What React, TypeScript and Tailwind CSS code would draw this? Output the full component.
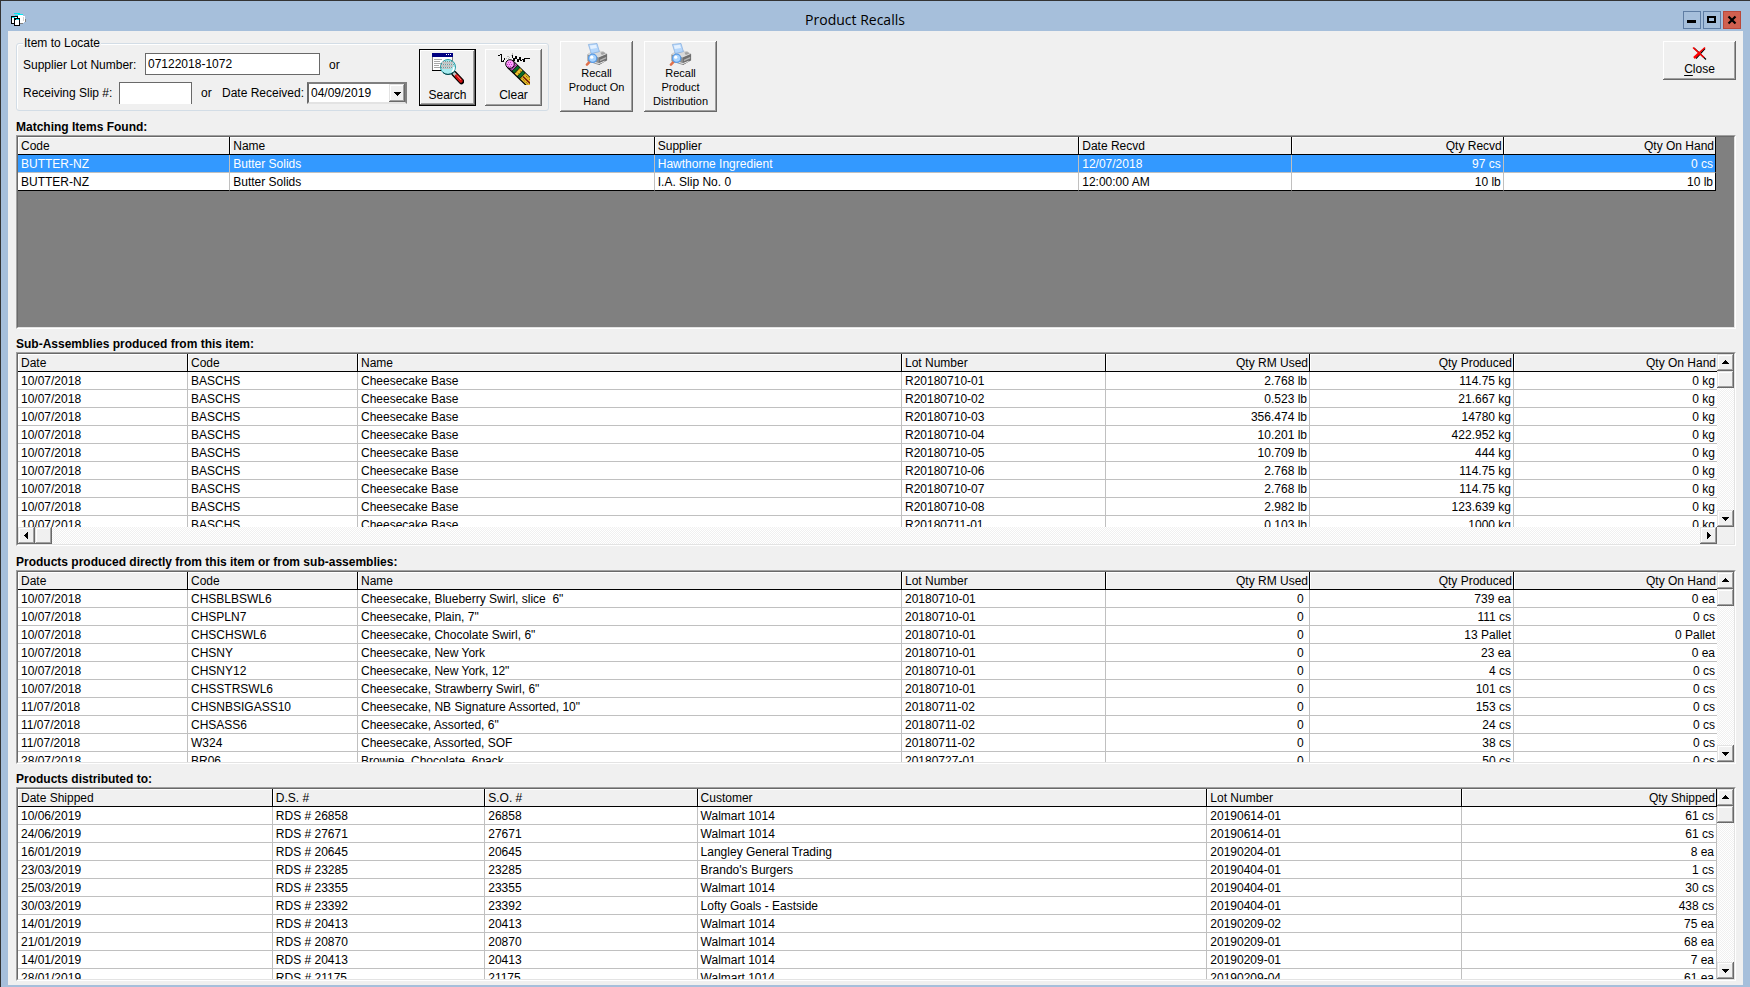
import React from "react";

const RAISED =
  "bg-[#f0f0f0] shadow-[inset_-1px_-1px_0_#696969,inset_1px_1px_0_#fff,inset_-2px_-2px_0_#a0a0a0]";
const SCROLL_BUTTON =
  "flex shrink-0 items-center justify-center bg-[#f0f0f0] shadow-[inset_-1px_-1px_0_#696969,inset_1px_1px_0_#e3e3e3,inset_-2px_-2px_0_#a0a0a0,inset_2px_2px_0_#fff]";
const TRACK =
  "bg-[repeating-conic-gradient(#ffffff_0%_25%,#f0f0f0_0%_50%)] bg-[length:2px_2px]";

type Column = { title: string; width: string; right?: boolean };

const itemColumns: Column[] = [
  { title: "Code", width: "w-[12.5%]" },
  { title: "Name", width: "w-[25%]" },
  { title: "Supplier", width: "w-[25%]" },
  { title: "Date Recvd", width: "w-[12.5%]" },
  { title: "Qty Recvd", width: "w-[12.5%]", right: true },
  { title: "Qty On Hand", width: "w-[12.5%]", right: true },
];

const itemRows = [
  ["BUTTER-NZ", "Butter Solids", "Hawthorne Ingredient", "12/07/2018", "97 cs", "0 cs"],
  ["BUTTER-NZ", "Butter Solids", "I.A. Slip No. 0", "12:00:00 AM", "10 lb", "10 lb"],
];

const productionColumns: Column[] = [
  { title: "Date", width: "w-[10%]" },
  { title: "Code", width: "w-[10%]" },
  { title: "Name", width: "w-[32%]" },
  { title: "Lot Number", width: "w-[12%]" },
  { title: "Qty RM Used", width: "w-[12%]", right: true },
  { title: "Qty Produced", width: "w-[12%]", right: true },
  { title: "Qty On Hand", width: "w-[12%]", right: true },
];

const subAssemblyRows = [
  ["R20180710-01", "2.768 lb", "114.75 kg"],
  ["R20180710-02", "0.523 lb", "21.667 kg"],
  ["R20180710-03", "356.474 lb", "14780 kg"],
  ["R20180710-04", "10.201 lb", "422.952 kg"],
  ["R20180710-05", "10.709 lb", "444 kg"],
  ["R20180710-06", "2.768 lb", "114.75 kg"],
  ["R20180710-07", "2.768 lb", "114.75 kg"],
  ["R20180710-08", "2.982 lb", "123.639 kg"],
  ["R20180711-01", "0.103 lb", "1000 kg"],
].map(([lot, used, made]) => ["10/07/2018", "BASCHS", "Cheesecake Base", lot, used, made, "0 kg"]);

const productRows = [
  ["10/07/2018", "CHSBLBSWL6", 'Cheesecake, Blueberry Swirl, slice  6"', "20180710-01", "0 ", "739 ea", "0 ea"],
  ["10/07/2018", "CHSPLN7", 'Cheesecake, Plain, 7"', "20180710-01", "0 ", "111 cs", "0 cs"],
  ["10/07/2018", "CHSCHSWL6", 'Cheesecake, Chocolate Swirl, 6"', "20180710-01", "0 ", "13 Pallet", "0 Pallet"],
  ["10/07/2018", "CHSNY", "Cheesecake, New York", "20180710-01", "0 ", "23 ea", "0 ea"],
  ["10/07/2018", "CHSNY12", 'Cheesecake, New York, 12"', "20180710-01", "0 ", "4 cs", "0 cs"],
  ["10/07/2018", "CHSSTRSWL6", 'Cheesecake, Strawberry Swirl, 6"', "20180710-01", "0 ", "101 cs", "0 cs"],
  ["11/07/2018", "CHSNBSIGASS10", 'Cheesecake, NB Signature Assorted, 10"', "20180711-02", "0 ", "153 cs", "0 cs"],
  ["11/07/2018", "CHSASS6", 'Cheesecake, Assorted, 6"', "20180711-02", "0 ", "24 cs", "0 cs"],
  ["11/07/2018", "W324", "Cheesecake, Assorted, SOF", "20180711-02", "0 ", "38 cs", "0 cs"],
  ["28/07/2018", "BR06", "Brownie, Chocolate, 6pack", "20180727-01", "0 ", "50 cs", "0 cs"],
];

const shipmentColumns: Column[] = [
  { title: "Date Shipped", width: "w-[15%]" },
  { title: "D.S. #", width: "w-[12.5%]" },
  { title: "S.O. #", width: "w-[12.5%]" },
  { title: "Customer", width: "w-[30%]" },
  { title: "Lot Number", width: "w-[15%]" },
  { title: "Qty Shipped", width: "w-[15%]", right: true },
];

const shipmentRows = [
  ["10/06/2019", "26858", "Walmart 1014", "20190614-01", "61 cs"],
  ["24/06/2019", "27671", "Walmart 1014", "20190614-01", "61 cs"],
  ["16/01/2019", "20645", "Langley General Trading", "20190204-01", "8 ea"],
  ["23/03/2019", "23285", "Brando's Burgers", "20190404-01", "1 cs"],
  ["25/03/2019", "23355", "Walmart 1014", "20190404-01", "30 cs"],
  ["30/03/2019", "23392", "Lofty Goals - Eastside", "20190404-01", "438 cs"],
  ["14/01/2019", "20413", "Walmart 1014", "20190209-02", "75 ea"],
  ["21/01/2019", "20870", "Walmart 1014", "20190209-01", "68 ea"],
  ["14/01/2019", "20413", "Walmart 1014", "20190209-01", "7 ea"],
  ["28/01/2019", "21175", "Walmart 1014", "20190209-04", "61 ea"],
].map(([date, no, customer, lot, qty]) => [date, `RDS # ${no}`, no, customer, lot, qty]);

function Arrow({ d }: { d: string }) {
  return (
    <svg width="7" height="7" viewBox="0 0 7 7" shapeRendering="crispEdges" aria-hidden="true">
      <path d={d} fill="#000" />
    </svg>
  );
}
const UP = "M3 1h1v1h1v1h1v1h1v1H0V4h1V3h1V2h1z";
const DOWN = "M0 2h7v1H6v1H5v1H4v1H3V5H2V4H1V3H0z";
const LEFT = "M1 3h1V2h1V1h1V0h1v7H4V6H3V5H2V4H1z";
const RIGHT = "M2 0h1v1h1v1h1v1h1v1H5v1H4v1H3v1H2z";

function VerticalScroll() {
  return (
    <div className={`flex w-[17px] shrink-0 flex-col justify-between ${TRACK}`}>
      <div className="flex flex-col">
        <button type="button" aria-label="Scroll up" className={`h-[17px] w-full ${SCROLL_BUTTON}`}>
          <Arrow d={UP} />
        </button>
        <div className={`h-[17px] w-full ${SCROLL_BUTTON}`} />
      </div>
      <button type="button" aria-label="Scroll down" className={`h-[17px] w-full ${SCROLL_BUTTON}`}>
        <Arrow d={DOWN} />
      </button>
    </div>
  );
}

function HorizontalScroll() {
  return (
    <div className="flex h-[17px] shrink-0">
      <div className={`flex flex-1 justify-between ${TRACK}`}>
        <div className="flex">
          <button type="button" aria-label="Scroll left" className={`w-[17px] ${SCROLL_BUTTON}`}>
            <Arrow d={LEFT} />
          </button>
          <div className={`w-[17px] ${SCROLL_BUTTON}`} />
        </div>
        <button type="button" aria-label="Scroll right" className={`w-[17px] ${SCROLL_BUTTON}`}>
          <Arrow d={RIGHT} />
        </button>
      </div>
      <div className="w-[17px] bg-[#f0f0f0]" />
    </div>
  );
}

function Grid({
  label,
  columns,
  rows,
  selected,
  closed,
  bleed,
}: {
  label: string;
  columns: Column[];
  rows: string[][];
  selected?: number;
  closed?: boolean;
  bleed?: boolean;
}) {
  return (
    <table
      aria-label={label}
      className={`table-fixed border-separate border-spacing-0 ${bleed ? "w-[calc(100%+1px)]" : "w-full"}`}
    >
      <thead>
        <tr>
          {columns.map((c) => (
            <th
              key={c.title}
              className={`h-[18px] overflow-hidden whitespace-pre border-b border-r border-black bg-[#f0f0f0] py-0 pl-[3px] pr-px font-normal leading-4 shadow-[inset_1px_1px_0_#fff] ${c.width} ${c.right ? "text-right" : "text-left"}`}
            >
              {c.title}
            </th>
          ))}
        </tr>
      </thead>
      <tbody>
        {rows.map((row, r) => {
          const last = closed && r === rows.length - 1;
          return (
            <tr key={r} className={r === selected ? "bg-[#3399ff] text-white" : "bg-white"}>
              {row.map((cell, i) => (
                <td
                  key={i}
                  className={`h-[18px] overflow-hidden whitespace-pre border-b border-r py-0 pl-[3px] pr-0.5 leading-4 ${last ? "border-b-black" : "border-b-[#c0c0c0]"} ${closed && i === row.length - 1 ? "border-r-black" : "border-r-[#c0c0c0]"} ${columns[i].right ? "text-right" : "text-left"}`}
                >
                  {cell}
                </td>
              ))}
            </tr>
          );
        })}
      </tbody>
    </table>
  );
}

function Section({ title, children }: { title: string; children: React.ReactNode }) {
  return (
    <section className="flex flex-col">
      <h2 className="flex h-[23px] items-end text-xs font-bold leading-4">{title}</h2>
      <div className="border border-b-white border-l-[#a0a0a0] border-r-white border-t-[#a0a0a0]">
        <div className="flex h-48 flex-col border border-b-[#e3e3e3] border-l-[#696969] border-r-[#e3e3e3] border-t-[#696969]">
          {children}
        </div>
      </div>
    </section>
  );
}

function WindowIcon() {
  return (
    <svg width="16" height="14" viewBox="0 0 16 14" shapeRendering="crispEdges" aria-hidden="true">
      <path d="M7 2h5v1h2v6h-1v1H8z" fill="#fff" />
      <path d="M3 0h6v1H3zM7 1h5v1H7zM4 2h3v1H4z" fill="#00e8f4" />
      <path d="M12 4h1v4h-1z" fill="#d0d0d0" />
      <path d="M14 6h1v3h-1zM9 10h3v1H9z" fill="#808080" />
      <path d="M0 3h7v2h2v8H3v-2H0z" fill="#000" />
      <path d="M1 5h2v5H1zM4 7h4v5H4zM4 4h2v1H4z" fill="#fff" />
      <path d="M1 4h3v1H1zM5 6h3v1H5z" fill="#00e8f4" />
    </svg>
  );
}

function SearchIcon() {
  return (
    <svg width="32" height="32" viewBox="0 0 32 32" aria-hidden="true">
      <g shapeRendering="crispEdges">
        <path d="M0 0h21v18H0z" fill="#808080" />
        <path d="M1 4h19v13H1z" fill="#fff" />
        <path d="M0 0h21v4H0z" fill="#000080" />
        <path d="M14 1h1v1h-1zM16 1h1v1h-1zM18 1h1v1h-1z" fill="#fff" />
        <path d="M2 6h8v1H2zM2 8h6v1H2zM2 10h7v1H2zM2 12h5v1H2zM2 14h6v1H2z" fill="#a8a8a8" />
        <path d="M0 17h10v1H0z" fill="#000" />
      </g>
      <path d="M22 20.500L29.500 28.500" stroke="#000" strokeWidth="5.500" strokeLinecap="round" />
      <path d="M21.500 20l2.500 2.500" stroke="#c8c8c8" strokeWidth="3" />
      <path d="M24.500 23L29 28" stroke="#d01010" strokeWidth="3.500" strokeLinecap="round" />
      <path d="M25 22.500l4 4.500" stroke="#ff8080" strokeWidth="1" />
      <circle cx="16" cy="14" r="7.500" fill="#a6ecf0" stroke="#2a9aa2" strokeWidth="1" />
      <g shapeRendering="crispEdges">
        <path d="M10 9h11v2H10zM9 12h12v2H9zM10 15h9v1h-9z" fill="#c4c4c4" />
        <path d="M11 8h9M9 11.500h13M9 14.500h12" stroke="#8c8c8c" strokeWidth="1" strokeDasharray="1 1" />
      </g>
      <path d="M20 19a6 6 0 0 0 2-5" stroke="#fff" strokeWidth="1.500" fill="none" />
      <path d="M11 19.500a7.500 7.500 0 0 0 10 0" stroke="#003c40" strokeWidth="1" fill="none" />
    </svg>
  );
}

function EraserIcon() {
  return (
    <svg width="32" height="32" viewBox="0 0 32 32" aria-hidden="true">
      <g fill="none" stroke="#000" strokeWidth="1" shapeRendering="crispEdges">
        <path d="M0 3L3 1.500L3 8L5 8.500L7 5" />
        <path d="M8 6l2-4l1 4l3-5v4" stroke="#b8b8b8" strokeDasharray="1 1" />
        <path d="M14 2.500l2 5l2-4l2 5l2-4l1 3l2-1l1 2l1-3h5" />
      </g>
      <g transform="translate(12 11) rotate(44)">
        <path d="M0-4.800h32v9.600H0z" fill="#000" />
        <path d="M0-4h6v7.500H0z" fill="#e87ae8" />
        <path d="M5-4v7.500" stroke="#8a308a" strokeWidth="1" />
        <path d="M6.500-4H9.500v7.500H6.500z" fill="#0a6a28" />
        <path d="M10-4h3.500v7.500H10z" fill="#f0c830" />
        <path d="M14-4h3v7.500h-3z" fill="#0a6a28" />
        <path d="M17.500-4H32v7.500H17.500z" fill="#f0c830" />
        <path d="M10-2h3.500M10 1h3.500M18-2.500h14M18 2h14" stroke="#8a5a00" strokeWidth="1" strokeDasharray="1 1" />
        <path d="M18 0h14" stroke="#701008" strokeWidth="1.500" />
      </g>
      <circle cx="12" cy="11" r="4.300" fill="#ff9cff" stroke="#000" strokeWidth="1" />
      <path d="M10 9.500h4M9 11.500h6M10 13.500h4" stroke="#c040c0" strokeWidth="1" strokeDasharray="1 1" />
    </svg>
  );
}

function PrinterIcon() {
  return (
    <svg width="24" height="23" viewBox="0 0 24 24" aria-hidden="true">
      <path d="M2 12l4-3 1 1.500 7.500-1.500L14 8l4 .5 4.500 3v6.500L14 23 2 19z" fill="#8f8f8f" />
      <path d="M2 12l4-3 1 1.500 7.500-1.500L14 8l4 .5 4.500 3L14 15z" fill="#d9d9d9" />
      <path d="M3 1.500L12 .5l2.500 8.500L6 11z" fill="#b4d6fb" stroke="#7fa9dc" strokeWidth=".7" />
      <path d="M4.500 2.500l6.500-.8 1 3.500-6.500 1z" fill="#e4f1ff" />
      <path d="M14 15l8.500-3.500v6.500L14 23z" fill="#6f6f6f" />
      <path d="M15 17.500l6.500-2.800v1.500L15 19z" fill="#b5b5b5" />
      <path d="M15.500 10l3-.7 2.500 1.700-4 1.500z" fill="#a2a2a2" />
      <path d="M9 20l5 1.500 6-2.500" stroke="#e9e9e9" strokeWidth="1" fill="none" />
      <path d="M4.500 19.500L1.500 22.500" stroke="#e0704a" strokeWidth="2.600" strokeLinecap="round" />
      <circle cx="7.500" cy="16" r="4.300" fill="#a9d4ff" stroke="#5a9ce6" strokeWidth="1.300" />
      <circle cx="6.500" cy="14.800" r="1.700" fill="#fff" />
    </svg>
  );
}

function CrossIcon() {
  return (
    <svg width="15" height="14" viewBox="0 0 15 14" aria-hidden="true">
      <path d="M2 2l12 11.500M13 2.500L4 12.500" stroke="#000" strokeWidth="1.200" />
      <path d="M1 1.500l11 10" stroke="#f00" strokeWidth="1.500" />
      <path d="M13 1.500L7.500 6.500" stroke="#f00" strokeWidth="1.500" />
      <path d="M8 6.500L2 12" stroke="#f00" strokeWidth="2.400" />
    </svg>
  );
}

const TITLE_BUTTON = "flex h-[18px] w-[18px] items-center justify-center border";

export default function App() {
  return (
    <div className="flex min-h-screen flex-col border-l border-t border-[#333333] bg-[#a6bfdb] font-['Liberation_Sans',Arial,sans-serif] text-xs text-black">
      <header className="flex h-[30px] items-center pl-2.5 pr-[9px] pt-2">
        <WindowIcon />
        <h1 className="flex-1 text-center font-['Open_Sans','Noto_Sans',sans-serif] text-sm leading-5">
          Product Recalls
        </h1>
        <div className="flex gap-0.5">
          <button type="button" aria-label="Minimize" className={`${TITLE_BUTTON} border-[#5f7da3]`}>
            <svg width="10" height="10" viewBox="0 0 10 10" shapeRendering="crispEdges" aria-hidden="true">
              <path d="M0 5h9v3H0z" />
            </svg>
          </button>
          <button type="button" aria-label="Maximize" className={`${TITLE_BUTTON} border-[#5f7da3]`}>
            <svg width="10" height="10" viewBox="0 0 10 10" shapeRendering="crispEdges" aria-hidden="true">
              <path d="M0 1h9v7H0zM2 3v3h5V3z" fillRule="evenodd" />
            </svg>
          </button>
          <button type="button" aria-label="Close window" className={`${TITLE_BUTTON} border-[#b9483a] bg-[#d0604f]`}>
            <svg width="10" height="10" viewBox="0 0 10 10" aria-hidden="true">
              <path d="M1.500 1.500l7 7M8.500 1.500l-7 7" stroke="#000" strokeWidth="2.200" />
            </svg>
          </button>
        </div>
      </header>

      <main className="mb-0.5 ml-[7px] mr-[7px] flex-1 bg-[#f0f0f0] pb-1 pl-2 pr-[7px]">
        <div className="flex items-start gap-[11px] pt-1.5">
          <fieldset className="min-w-0 rounded-[3px] border border-[#d3dde6] px-1.5 pb-1 shadow-[inset_1px_1px_0_#fff]">
            <legend className="bg-[#f0f0f0] px-px leading-3">Item to Locate</legend>
            <div className="flex gap-3">
              <div className="flex flex-col gap-[7px] pt-1">
                <div className="flex h-[22px] items-center">
                  <label htmlFor="lot" className="w-[122px] pt-0.5">Supplier Lot Number:</label>
                  <input
                    id="lot"
                    type="text"
                    defaultValue="07122018-1072"
                    className="h-full w-[175px] border border-[#696969] bg-white px-0.5 outline-none"
                  />
                  <span className="pl-[9px] pt-0.5">or</span>
                </div>
                <div className="flex h-[22px] items-center">
                  <label htmlFor="slip" className="w-24">Receiving Slip #:</label>
                  <input
                    id="slip"
                    type="text"
                    className="h-full w-[73px] border border-b-0 border-[#696969] bg-white px-0.5 outline-none"
                  />
                  <span className="w-7 pl-[9px]">or</span>
                  <label htmlFor="received" className="w-[87px] pl-0.5">Date Received:</label>
                  <div className="flex h-full w-[100px] border-2 border-b-[#e3e3e3] border-l-[#696969] border-r-[#808080] border-t-[#808080] bg-white">
                    <select id="received" className="min-w-0 flex-1 appearance-none bg-white pl-0.5 outline-none">
                      <option>04/09/2019</option>
                    </select>
                    <span className={`w-4 ${SCROLL_BUTTON}`}>
                      <Arrow d={DOWN} />
                    </span>
                  </div>
                </div>
              </div>
              <div className="flex gap-[9px]">
                <button
                  type="button"
                  className="flex h-[57px] w-[57px] flex-col items-center gap-[3px] border border-black bg-[#f0f0f0] pt-[3px] leading-[15px] shadow-[inset_-1px_-1px_0_#696969,inset_1px_1px_0_#fff,inset_-2px_-2px_0_#a0a0a0]"
                >
                  <SearchIcon />
                  Search
                </button>
                <button type="button" className={`flex h-[57px] w-[57px] flex-col items-center gap-[3px] pt-1 leading-[15px] ${RAISED}`}>
                  <EraserIcon />
                  Clear
                </button>
              </div>
            </div>
          </fieldset>
          <button type="button" className={`mt-1 flex h-[71px] w-[73px] flex-col items-center px-1 pt-0.5 text-[11px] leading-[14px] ${RAISED}`}>
            <PrinterIcon />
            <span>Recall Product On Hand</span>
          </button>
          <button type="button" className={`mt-1 flex h-[71px] w-[73px] flex-col items-center px-1 pt-0.5 text-[11px] leading-[14px] ${RAISED}`}>
            <PrinterIcon />
            <span>Recall Product Distribution</span>
          </button>
          <button type="button" className={`ml-auto mt-1 flex h-[39px] w-[73px] flex-col items-center gap-px pt-[5px] leading-4 ${RAISED}`}>
            <CrossIcon />
            <span>
              <span className="underline underline-offset-2">C</span>lose
            </span>
          </button>
        </div>

        <Section title="Matching Items Found:">
          <div className="flex-1 bg-[#808080] pr-[18px]">
            <Grid label="Matching items" columns={itemColumns} rows={itemRows} selected={0} closed />
          </div>
        </Section>

        <Section title="Sub-Assemblies produced from this item:">
          <div className="flex min-h-0 flex-1">
            <div className="min-w-0 flex-1 overflow-hidden bg-white">
              <Grid label="Sub-assemblies" columns={productionColumns} rows={subAssemblyRows} bleed />
            </div>
            <VerticalScroll />
          </div>
          <HorizontalScroll />
        </Section>

        <div className="pt-px">
          <Section title="Products produced directly from this item or from sub-assemblies:">
            <div className="flex min-h-0 flex-1">
              <div className="min-w-0 flex-1 overflow-hidden bg-white">
                <Grid label="Products produced" columns={productionColumns} rows={productRows} bleed />
              </div>
              <VerticalScroll />
            </div>
          </Section>
        </div>

        <Section title="Products distributed to:">
          <div className="flex min-h-0 flex-1">
            <div className="min-w-0 flex-1 overflow-hidden bg-white">
              <Grid label="Products distributed" columns={shipmentColumns} rows={shipmentRows} />
            </div>
            <VerticalScroll />
          </div>
        </Section>
      </main>
    </div>
  );
}
